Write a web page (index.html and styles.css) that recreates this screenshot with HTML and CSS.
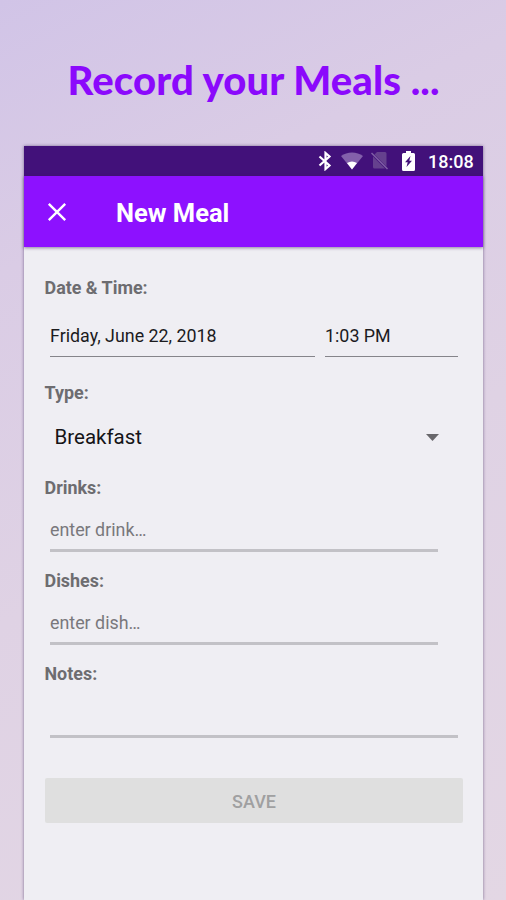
FILE: index.html
```
<!DOCTYPE html>
<html lang="en">
<head>
<meta charset="utf-8">
<title>New Meal</title>
<link rel="stylesheet" href="styles.css">
</head>
<body>
<h1 class="headline">Record your Meals ...</h1>
<main class="phone">
  <div class="status">
    <svg class="bluetooth" width="14" height="20" viewBox="0 0 14 20" fill="none" stroke="#fff" stroke-width="2.200"><path d="M1.500 5.500 11.500 14.500 7.500 18V2l4 3.500L1.500 14.500"/></svg>
    <svg class="wifi" width="22" height="18" viewBox="0 0 22 18"><path fill="#8360ab" d="M0 4C6-.8 16-.8 22 4L11 17.500Z"/><path fill="#fff" d="M6 11Q11 8 16 11L11 17.500Z"/></svg>
    <svg class="sim" width="17" height="18" viewBox="0 0 17 18"><path fill="#65418e" d="M6 0h8q1.500 0 1.500 1.500v13L3.500 2.500ZM2 4.500 14 16.500H3.500Q2 16.500 2 15Z"/><path d="M.5 1 16.500 17" stroke="#8060a6" stroke-width="1.500"/></svg>
    <svg class="battery" width="13" height="20" viewBox="0 0 13 20"><path fill="#fff" d="M4 0h5v2h2.500q1.500 0 1.500 1.500v15q0 1.500-1.500 1.500h-10Q0 20 0 18.500v-15Q0 2 1.500 2H4Z"/><path fill="#42117a" d="M8.500 5 3 11.300h2.700L4.500 16 10 9.700H7.300Z"/></svg>
    <span class="clock">18:08</span>
  </div>
  <header class="appbar">
    <svg class="close" width="20" height="20" viewBox="0 0 20 20" fill="none" stroke="#fff" stroke-width="2.400"><path d="m1.800 1.800 16.400 16.400m0-16.400L1.800 18.200"/></svg>
    <h2 class="title">New Meal</h2>
  </header>
  <form class="form">
    <div class="label">Date &amp; Time:</div>
    <div class="when">
      <div class="field set date">Friday, June 22, 2018</div>
      <div class="field set time">1:03 PM</div>
    </div>
    <div class="label type">Type:</div>
    <div class="select"><span>Breakfast</span><svg width="13" height="7" viewBox="0 0 13 7"><path fill="#68676b" d="M0 0h13L6.500 7Z"/></svg></div>
    <div class="label drinks">Drinks:</div>
    <div class="field entry">enter drink…</div>
    <div class="label next">Dishes:</div>
    <div class="field entry">enter dish…</div>
    <div class="label next">Notes:</div>
    <div class="field entry notes"></div>
    <button class="save" type="button" disabled>SAVE</button>
  </form>
</main>
</body>
</html>
```
FILE: styles.css
```
* { box-sizing: border-box; }
body {
  margin: 0;
  height: 900px;
  overflow: hidden;
  display: flex;
  flex-direction: column;
  font-family: Roboto, sans-serif;
  background: linear-gradient(155deg, #d1c4e7 0%, #dacce5 24%, #dfd2e4 55%, #e3d7e4 100%);
}
.headline {
  margin: 0;
  height: 146px;
  padding: 56px 0 0 67.500px;
  font: 900 40px/48px Lato, sans-serif;
  letter-spacing: .12px;
  color: #8b09fc;
  white-space: nowrap;
}
.phone {
  width: 459px;
  height: 754px;
  margin-left: 24px;
  background: #efeef3;
  box-shadow: 0 0 3px rgba(70, 50, 100, .65);
}
.status {
  height: 30px;
  display: flex;
  align-items: center;
  padding-left: 294px;
  background: #42117a;
}
.wifi { margin-left: 9px; }
.sim { margin-left: 8px; }
.battery { margin-left: 14px; }
.clock {
  margin: 1px 0 0 13px;
  font-size: 18px;
  font-weight: 500;
  line-height: 30px;
  color: #fff;
}
.appbar {
  height: 71px;
  display: flex;
  align-items: center;
  padding-left: 23px;
  background: #8d11ff;
  box-shadow: 0 1px 3px rgba(50, 30, 80, .5);
}
.title {
  margin: 2px 0 0 49px;
  font-size: 25.500px;
  font-weight: 700;
  line-height: 32px;
  color: #fff;
}
.form { padding: 31px 20px 0; }
.label {
  height: 20px;
  padding-left: .5px;
  font-size: 17.900px;
  font-weight: 700;
  line-height: 20px;
  color: #6d6c70;
}
.when { display: flex; gap: 10px; margin-left: 6px; }
.field {
  font-size: 17.850px;
  line-height: 20px;
  white-space: nowrap;
}
.set {
  height: 59px;
  padding-top: 28px;
  border-bottom: 1.500px solid #85848a;
  color: #1c1b1e;
}
.date { width: 265px; }
.time { width: 133px; }
.type { margin-top: 26px; }
.select {
  height: 68px;
  display: flex;
  justify-content: space-between;
  align-items: center;
  padding: 0 24px 0 10.500px;
  font-size: 20.500px;
  color: #151417;
}
.drinks { margin-top: 7px; }
.entry {
  width: 388px;
  height: 54px;
  margin-left: 6px;
  padding-top: 22px;
  border-bottom: 3px solid #c2c1c6;
  color: #79787c;
}
.next { margin-top: 19px; }
.notes { width: 408px; }
.save {
  display: block;
  width: 418px;
  height: 45px;
  margin: 40px 0 0 1px;
  padding: 2px 0 0;
  border: 0;
  border-radius: 2px;
  background: #dfdfdf;
  font: 500 18px Roboto, sans-serif;
  color: #a0a0a1;
}
```
